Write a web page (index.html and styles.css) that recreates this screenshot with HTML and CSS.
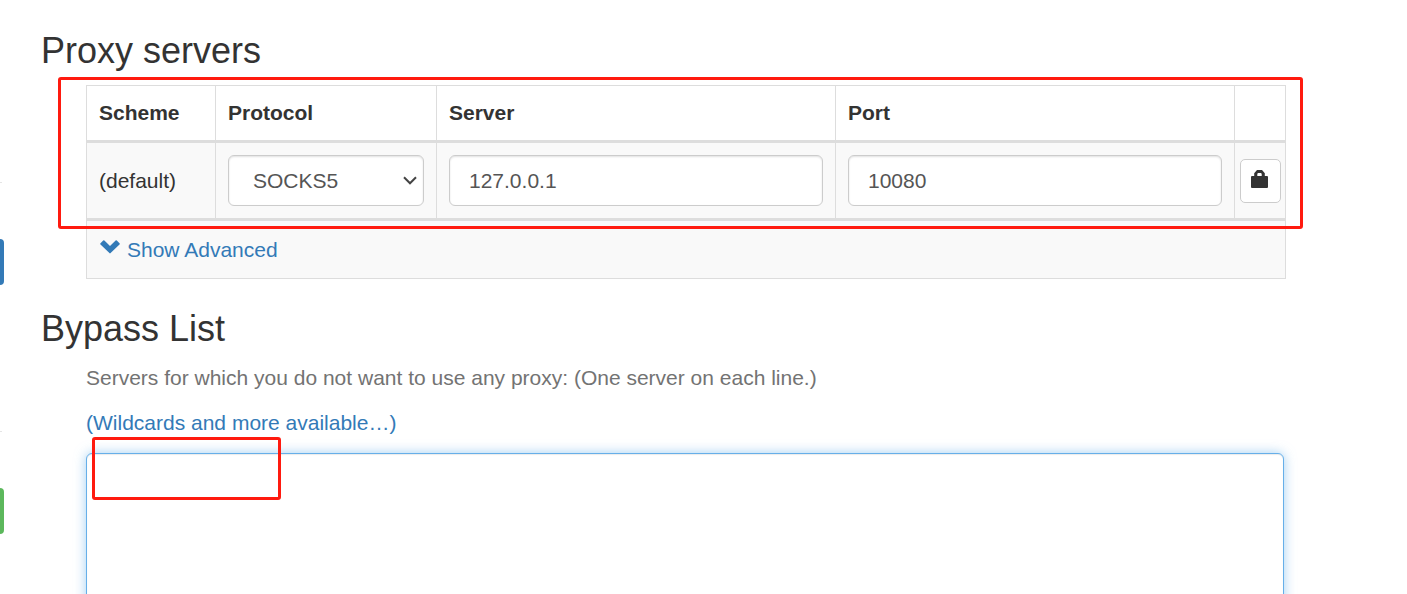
FILE: index.html
```html
<!DOCTYPE html>
<html lang="en">
<head>
<meta charset="utf-8">
<title>Proxy servers</title>
<link rel="stylesheet" href="styles.css">
</head>
<body>
<div class="page">
  <aside class="side">
    <hr class="side-rule">
    <button class="side-tab side-tab-primary" type="button"></button>
    <hr class="side-rule">
    <button class="side-tab side-tab-success" type="button"></button>
  </aside>
  <main class="main">
    <section class="section servers">
      <h2 class="heading">Proxy servers</h2>
      <div class="section-body">
        <table class="table">
          <colgroup>
            <col class="col-scheme"><col class="col-protocol"><col><col><col class="col-auth">
          </colgroup>
          <thead>
            <tr>
              <th>Scheme</th>
              <th id="protocol">Protocol</th>
              <th id="server">Server</th>
              <th id="port">Port</th>
              <td></td>
            </tr>
          </thead>
          <tbody>
            <tr>
              <td>(default)</td>
              <td>
                <div class="select-wrap">
                  <select class="control select" aria-labelledby="protocol"><option>SOCKS5</option></select>
                  <svg class="select-arrow" viewBox="0 0 14 9" aria-hidden="true"><path d="M1 1.3 7 7.3 13 1.3" fill="none" stroke="#444" stroke-width="2"/></svg>
                </div>
              </td>
              <td><input class="control" type="text" value="127.0.0.1" aria-labelledby="server"></td>
              <td><input class="control" type="text" value="10080" aria-labelledby="port"></td>
              <td class="auth-cell">
                <button class="auth" type="button">
                  <svg class="lock" viewBox="0 0 17 18" aria-hidden="true"><path fill="#333" fill-rule="evenodd" d="M3.2 6V3.2L6 0h5l2.8 3.2V6H16q1 0 1 1v10q0 1-1 1H1q-1 0-1-1V7q0-1 1-1zM6.3 6h4.4V3.8l-.8-.8H7.1l-.8.8z"/></svg>
                </button>
              </td>
            </tr>
          </tbody>
          <tfoot>
            <tr>
              <td colspan="5"><a class="link advanced" href="#"><svg class="chevron" viewBox="0 0 20 14" aria-hidden="true"><path fill="#337ab7" d="M.5 3.3 3.2.6q.6-.5 1.2 0L10 6 15.6.6q.6-.5 1.2 0l2.7 2.7q.6.6 0 1.2l-8.9 8.6q-.6.6-1.2 0L.5 4.5q-.6-.6 0-1.2z"/></svg>Show Advanced</a></td>
            </tr>
          </tfoot>
        </table>
      </div>
      <div class="mark mark-servers"></div>
    </section>
    <section class="section bypass">
      <h2 class="heading" id="bypass">Bypass List</h2>
      <div class="section-body">
        <p class="help">Servers for which you do not want to use any proxy: (One server on each line.)</p>
        <p class="help"><a class="link" href="#">(Wildcards and more available…)</a></p>
        <div class="list-wrap">
          <textarea class="list" aria-labelledby="bypass"></textarea>
          <div class="mark mark-list"></div>
        </div>
      </div>
    </section>
  </main>
</div>
</body>
</html>
```
FILE: styles.css
```css
* { box-sizing: border-box; }
body {
  margin: 0;
  background: #fff;
  color: #333;
  font: 21px/30px "Liberation Sans", Arial, sans-serif;
}
.page {
  display: flex;
  height: 100vh;
  overflow: hidden;
}
.side {
  flex: none;
  width: 4px;
  padding-top: 182px;
}
.side-rule {
  width: 2px;
  height: 1px;
  margin: 0;
  border: 0;
  background: #e5e5e5;
}
.side-tab {
  display: block;
  width: 4px;
  height: 46px;
  margin: 56px 0 146px;
  padding: 0;
  border: 0;
  border-radius: 0 5px 5px 0;
}
.side-tab-primary { background: #337ab7; }
.side-tab-success { background: #5cb85c; }
.main {
  flex: 1;
  min-width: 0;
  padding: 31px 121px 0 37px;
}
.section { position: relative; }
.heading {
  margin: 0;
  font-size: 36px;
  line-height: 40px;
  font-weight: 400;
}
.section-body { padding-left: 45px; }
.servers .section-body { padding-top: 14px; }
.table {
  width: 100%;
  table-layout: fixed;
  border-collapse: collapse;
  border: 1px solid #ddd;
}
.col-scheme { width: 129px; }
.col-protocol { width: 221px; }
.col-auth { width: 51px; }
.table th,
.table td {
  padding: 12px;
  border: 1px solid #ddd;
  text-align: left;
  vertical-align: middle;
}
.table tbody td,
.table tfoot td { border-top: 3px solid #ddd; background: #f9f9f9; }
.table tfoot td { padding: 14px 12px 13px 13px; }
.table .auth-cell { padding: 0 4px 0 5px; }
.control {
  display: block;
  width: 100%;
  height: 51px;
  padding: 0 19px;
  border: 1px solid #ccc;
  border-radius: 6px;
  background: #fff;
  box-shadow: inset 0 1px 2px rgba(0, 0, 0, .12);
  color: #555;
  font: inherit;
}
.select-wrap { position: relative; }
.select {
  appearance: none;
  padding: 0 24px;
}
.select-arrow {
  position: absolute;
  right: 7px;
  top: 21px;
  width: 14px;
  height: 9px;
  pointer-events: none;
}
.auth {
  display: flex;
  align-items: flex-start;
  justify-content: center;
  width: 100%;
  height: 44px;
  padding: 10px 2px 0 0;
  border: 1px solid #ccc;
  border-radius: 5px;
  background: #fff;
}
.lock { flex: none; width: 17px; height: 18px; }
.link { color: #337ab7; text-decoration: none; }
.advanced { display: flex; gap: 7px; }
.chevron { width: 20px; height: 14px; margin-top: 5px; }
.bypass { margin-top: 30px; }
.help {
  margin: 0 0 15px;
  color: #737373;
}
.bypass .heading { margin-bottom: 14px; }
.list-wrap {
  position: relative;
  padding-right: 2px;
}
.list {
  display: block;
  width: 100%;
  height: 240px;
  border: 1px solid #66afe9;
  border-radius: 6px;
  outline: 0;
  resize: none;
  box-shadow: inset 0 1px 1px rgba(0, 0, 0, .08), 0 0 12px rgba(102, 175, 233, .6);
  font: inherit;
}
.mark {
  position: absolute;
  border: 3px solid #ff1a0f;
  border-radius: 3px;
  pointer-events: none;
}
.mark-servers {
  top: 46px;
  right: -17px;
  left: 17px;
  height: 152px;
}
.mark-list {
  top: -16px;
  left: 6px;
  width: 189px;
  height: 63px;
}
```
